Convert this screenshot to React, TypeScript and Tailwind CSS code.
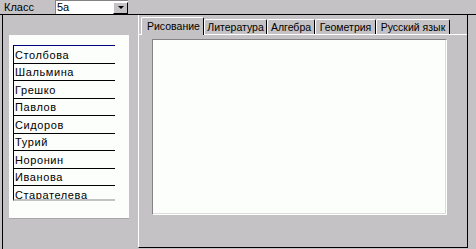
const students = [
  "Столбова",
  "Шальмина",
  "Грешко",
  "Павлов",
  "Сидоров",
  "Турий",
  "Норонин",
  "Иванова",
  "Старателева",
]

const tabs = [
  { label: "Литература", w: "w-[63px]" },
  { label: "Алгебра", w: "w-[48px]" },
  { label: "Геометрия", w: "w-[61px]" },
  { label: "Русский язык", w: "w-[74px]" },
]

export default function App() {
  return (
    <div className="w-[476px] h-[249px] overflow-hidden bg-[#c4c2c4] font-['Liberation_Sans',Arial,sans-serif] text-[11px] leading-none text-black">
      {/* Top bar */}
      <div className="flex h-[15px] items-center border-b border-black">
        <span className="w-[55px] pl-[4px]">Класс</span>
        <div className="flex h-[14px] w-[73px] items-center border-l border-t border-[#848284] bg-white">
          <span className="flex-1 pl-[1px]">5а</span>
          <div className="flex h-[12px] w-[15px] items-center justify-center border-t border-l border-white border-r border-b border-r-black border-b-black bg-[#c4c2c4]">
            <div className="h-0 w-0 border-l-[3px] border-r-[3px] border-t-[3px] border-l-transparent border-r-transparent border-t-black" />
          </div>
        </div>
      </div>

      <div className="flex h-[234px]">
        {/* Left: student list */}
        <div className="w-[138px] pl-[2px]">
          <div className="h-full border-l border-black pl-[6px] pt-[20px]">
            <div className="h-[184px] w-[120px] border-b border-[#a8a8a8] bg-[#fcfefc] pl-[4px] pt-[10px]">
              <div className="h-[156px] w-[102px] overflow-hidden border-b-2 border-[#c4c2c4] border-l border-l-black">
                <div className="border-t border-[#000080]">
                  {students.map((s) => (
                    <div key={s} className="flex h-[17.5px] items-center border-b border-black pl-[1px] pt-[2px] tracking-[0.6px]">
                      {s}
                    </div>
                  ))}
                </div>
              </div>
            </div>
          </div>
        </div>

        {/* Right: tabs */}
        <div className="flex h-[233px] w-[330px] flex-col border-l border-white border-r border-b border-r-black border-b-black">
          <div className="flex h-[19px] items-end pl-[2px] text-[10.5px]">
            <div className="relative z-10 -mb-px flex h-[18px] w-[63px] items-center rounded-t-[2px] border-t border-l border-white border-r border-r-black bg-[#c4c2c4] pl-[5px]">
              Рисование
            </div>
            {tabs.map((t) => (
              <div
                key={t.label}
                className={`flex h-[15px] ${t.w} items-center justify-center rounded-t-[2px] border-t border-l border-white border-r border-r-black`}
              >
                {t.label}
              </div>
            ))}
          </div>
          <div className="flex-1 border-t border-white pl-[13px] pt-[4px]">
            <div className="h-[176px] w-[295px] border-t border-l border-[#848284] border-r border-b border-r-white border-b-white bg-[#fcfefc] shadow-[inset_-1px_-1px_0_#dcdcdc]" />
          </div>
        </div>
      </div>
    </div>
  )
}
